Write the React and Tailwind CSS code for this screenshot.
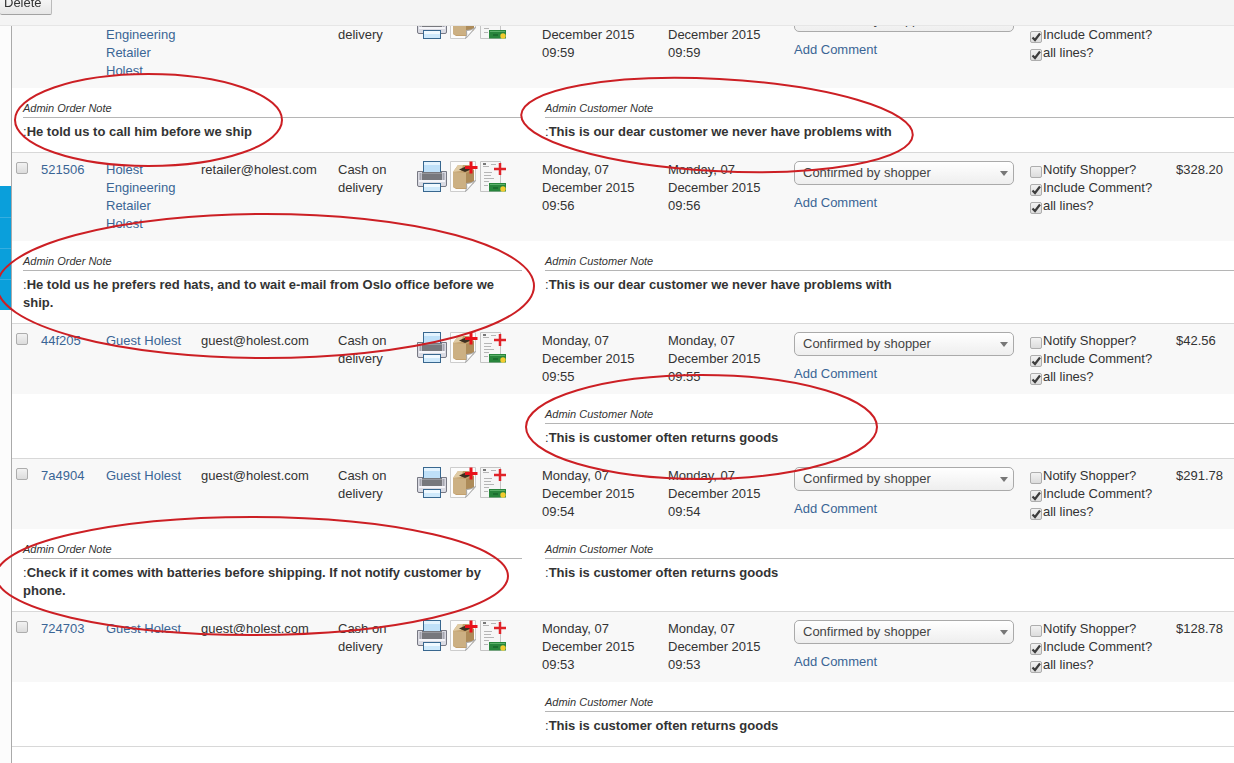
import React from 'react';

const shared = {
  guest: { name: 'Guest Holest', email: 'guest@holest.com' },
  retailer: { name: 'Holest Engineering Retailer Holest', email: 'retailer@holest.com' },
};

const dearCustomer = 'This is our dear customer we never have problems with';
const oftenReturns = 'This is customer often returns goods';

const orders = [
  {
    id: '6d1b02',
    ...shared.retailer,
    time: '09:59',
    total: '$328.20',
    orderNote: 'He told us to call him before we ship',
    customerNote: dearCustomer,
  },
  {
    id: '521506',
    ...shared.retailer,
    time: '09:56',
    total: '$328.20',
    orderNote: 'He told us he prefers red hats, and to wait e-mail from Oslo office before we ship.',
    customerNote: dearCustomer,
  },
  { id: '44f205', ...shared.guest, time: '09:55', total: '$42.56', customerNote: oftenReturns },
  {
    id: '7a4904',
    ...shared.guest,
    time: '09:54',
    total: '$291.78',
    orderNote: 'Check if it comes with batteries before shipping. If not notify customer by phone.',
    customerNote: oftenReturns,
  },
  { id: '724703', ...shared.guest, time: '09:53', total: '$128.78', customerNote: oftenReturns },
];

const PrinterIcon = () => (
  <svg width="30" height="32" viewBox="0 0 30 32">
    <path d="M0.5 10.5h29v13.5q0 1.5-1.5 1.5H2Q0.5 25.5 0.5 24z" fill="#dadbe3" stroke="#777883" />
    <path d="M3.5 12v9M26.5 12v9" stroke="#a5a6b0" strokeWidth="2" />
    <rect x="6.5" y="0.5" width="17" height="12" fill="#bfe0f8" stroke="#38678f" />
    <path d="M7 1h16v3H7z" fill="#e3f3fe" />
    <rect x="5" y="11" width="20" height="8" fill="#77787d" />
    <path d="M5 12.5h20" stroke="#96979c" />
    <path d="M2 20h26" stroke="#f5f5f9" strokeWidth="2" />
    <rect x="6.5" y="22.5" width="17" height="8" fill="#cfe9fb" stroke="#38678f" />
    <path d="M7 23h16v3H7z" fill="#f0f9ff" />
  </svg>
);

const ShipmentIcon = () => (
  <svg width="28" height="32" viewBox="0 0 28 32">
    <path d="M0.5 0.5h25V20L16 30.5H0.5z" fill="#fcfcfc" stroke="#cdcdcd" />
    <path d="M3 11l5-7h11l5 5v13l-7 4-1 2H6l-3-2z" fill="#c3a06d" />
    <path d="M3 11l13 1v15H6l-3-1z" fill="#ccb083" />
    <path d="M16 12l8-3v12l-8 6z" fill="#ad8b59" />
    <path d="M3 11l5-7h5l-2 6z" fill="#e0cba4" />
    <path d="M9 8.5l8-3.5 5 3-7 3z" fill="#3d2f20" />
    <path d="M15.5 30.5q2-4 1-8 5 0 9-3z" fill="#fff" stroke="#a8a8a8" />
    <path d="M21 0.5v12M15 6.5h12.500" stroke="#e8121b" strokeWidth="3" />
  </svg>
);

const InvoiceIcon = () => (
  <svg width="27" height="32" viewBox="0 0 27 32">
    <path d="M0.5 0.5h20v30h-20z" fill="#f6f6f6" stroke="#c4c4c4" />
    <path d="M3 5.500h6M11 3.500h5M4 11.500h8M4 14.500h7M4 17.500h10M4 20.500h5M4 24.500h4" stroke="#b5b5b5" />
    <path d="M3 3h3" stroke="#777" strokeWidth="2" />
    <path d="M9 22h17v8.500H9z" fill="#28853c" />
    <path d="M10 23.500h15" stroke="#5bb06a" />
    <path d="M13 27h5" stroke="#1c6e30" strokeWidth="2" />
    <circle cx="23" cy="28" r="2.700" fill="#f2cb2f" />
    <path d="M20 2v12M14 8h12" stroke="#e02228" strokeWidth="2.500" />
  </svg>
);

const Checkbox = ({ className = '', ...props }) => (
  <span className={`relative block h-3 w-3 shrink-0 ${className}`}>
    <input
      type="checkbox"
      className="peer block h-3 w-3 appearance-none rounded-xs border border-[#adadad] bg-linear-to-b from-[#f2f2f2] to-[#dcdcdc]"
      {...props}
    />
    <svg
      viewBox="0 0 12 12"
      className="pointer-events-none absolute inset-0 hidden h-3 w-3 peer-checked:block"
    >
      <path d="M2.500 6.500L5 9L10 2.500" fill="none" stroke="#3c3c3c" strokeWidth="2.200" />
    </svg>
  </span>
);

const Option = ({ label, checked }) => (
  <label className="flex items-start whitespace-nowrap">
    <Checkbox className="mt-[5px] mr-px" defaultChecked={checked} />
    {label}
  </label>
);

const Note = ({ title, text }) => (
  <>
    <h4 className="border-b border-[#b5b5b5] text-[11px] leading-[18px] font-normal italic">{title}</h4>
    <p className="mt-[5px] font-bold">
      <span className="font-normal">:</span>
      {text}
    </p>
  </>
);

const OrderRows = ({ order }) => (
  <>
    <tr className="bg-[#f8f8f8] align-top *:px-1 *:py-2">
      <td>
        <Checkbox className="mt-px" aria-label={`Select order ${order.id}`} />
      </td>
      <td><a href="#order" className="text-[#3a6595]">{order.id}</a></td>
      <td><a href="#customer" className="block pr-2 text-[#3a6595]">{order.name}</a></td>
      <td>{order.email}</td>
      <td>Cash on delivery</td>
      <td>
        <div className="flex gap-[3px]">
          <a href="#print" aria-label="Print order"><PrinterIcon /></a>
          <a href="#shipment" aria-label="New delivery note"><ShipmentIcon /></a>
          <a href="#invoice" aria-label="New invoice" className="-ml-px"><InvoiceIcon /></a>
        </div>
      </td>
      <td>Monday, 07 December 2015 {order.time}</td>
      <td>Monday, 07 December 2015 {order.time}</td>
      <td>
        <div className="relative w-[220px]">
          <select
            aria-label="Order status"
            className="block h-6 w-full appearance-none rounded-[5px] border border-[#aaa] bg-linear-to-b from-white to-[#eee] pl-2 leading-[22px] text-[#444]"
          >
            <option>Confirmed by shopper</option>
          </select>
          <svg width="8" height="5" className="pointer-events-none absolute top-[10px] right-[6px]">
            <path d="M0 0h8L4 5z" fill="#777" />
          </svg>
        </div>
        <a href="#comment" className="mt-[9px] block text-[#3a6595]">Add Comment</a>
      </td>
      <td>
        <Option label="Notify Shopper?" />
        <Option label="Include Comment?" checked />
        <Option label="all lines?" checked />
      </td>
      <td>{order.total}</td>
    </tr>
    <tr className="border-b border-[#d8d8d8] bg-white align-top">
      <td colSpan={6} className="pt-[11px] pr-4 pb-[11px] pl-[11px]">
        {order.orderNote && <Note title="Admin Order Note" text={order.orderNote} />}
      </td>
      <td colSpan={5} className="pt-[11px] pb-[11px] pl-[7px]">
        <Note title="Admin Customer Note" text={order.customerNote} />
      </td>
    </tr>
  </>
);

// Red rings that point at the notes
const Highlights = () => (
  <svg
    className="pointer-events-none absolute top-0 left-0 z-20 h-full w-full"
    fill="none"
    stroke="#cc1f24"
    strokeWidth="2"
  >
    <ellipse cx="148.5" cy="120" rx="133.5" ry="46" />
    <ellipse cx="717" cy="125" rx="196" ry="46" transform="rotate(3 717 125)" />
    <ellipse cx="265.5" cy="286" rx="268.5" ry="72" />
    <ellipse cx="701.5" cy="427" rx="175.5" ry="52" />
    <ellipse cx="252" cy="576" rx="256" ry="59" />
  </svg>
);

const App = () => {
  return (
    <div className="relative flex min-h-screen overflow-hidden bg-white font-['Liberation_Sans',Arial,sans-serif] text-[13px] leading-[18px] text-[#333]">
      {/* Toolbar stays on top of the scrolled list */}
      <header className="fixed inset-x-0 top-0 z-10 flex h-[26px] items-start border-b border-[#e6e6e6] bg-[#f4f4f4]">
        <button className="-mt-[10px] h-[25px] rounded-b-xs border border-l-0 border-[#bbb] border-b-[#a2a2a2] bg-linear-to-b from-white to-[#e6e6e6] pr-[9px] pl-1">
          Delete
        </button>
      </header>

      {/* Collapsed menu */}
      <aside className="w-[11px] shrink-0 bg-[#fcfcfc] pt-[186px]">
        <div className="h-[31px] bg-[#0a9fdb]" />
        <div className="h-[31px] border-t border-[#35aee0] bg-[#0a9fdb]" />
        <div className="h-[31px] border-t border-[#35aee0] bg-[#0a9fdb]" />
        <div className="h-[31px] border-t border-[#35aee0] bg-[#0a9fdb]" />
      </aside>

      <main className="min-w-0 flex-1 border-l border-[#aaa]">
        <table className="w-full table-fixed border-collapse">
          <colgroup>
            <col className="w-[25px]" />
            <col className="w-[65px]" />
            <col className="w-[95px]" />
            <col className="w-[137px]" />
            <col className="w-[79px]" />
            <col className="w-[125px]" />
            <col className="w-[126px]" />
            <col className="w-[126px]" />
            <col className="w-[236px]" />
            <col className="w-[146px]" />
            <col />
          </colgroup>
          <tbody>
            {orders.map((order) => (
              <OrderRows key={order.id} order={order} />
            ))}
          </tbody>
        </table>
      </main>

      <Highlights />
    </div>
  );
};

export default App;
